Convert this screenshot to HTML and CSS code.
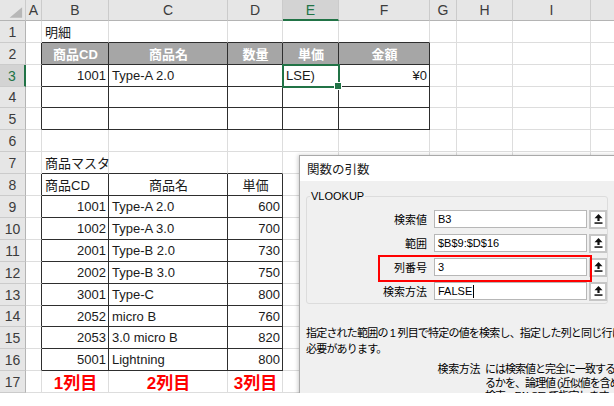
FILE: index.html
```html
<!DOCTYPE html>
<html lang="ja">
<head>
<meta charset="utf-8">
<title>VLOOKUP</title>
<link rel="stylesheet" href="styles.css">
</head>
<body>
<div class="screen">
  <div class="sheet">
    <div class="h corner"><svg width="26" height="21" viewBox="0 0 26 21"><polygon points="23,7 23,18 10,18" fill="#b7b7b7"/></svg></div>
    <div class="h">A</div><div class="h">B</div><div class="h">C</div><div class="h">D</div><div class="h sel">E</div><div class="h">F</div><div class="h">G</div><div class="h">H</div><div class="h">I</div><div class="h">J</div>

    <div class="rh">1</div><div class="c"></div><div class="c tp">明細</div><div class="c tp"></div><div class="c tp"></div><div class="c tp"></div><div class="c tp"></div><div class="c"></div><div class="c"></div><div class="c"></div><div class="c"></div>

    <div class="rh">2</div><div class="c lb"></div><div class="c t th">商品CD</div><div class="c t th">商品名</div><div class="c t th">数量</div><div class="c t th">単価</div><div class="c t th">金額</div><div class="c"></div><div class="c"></div><div class="c"></div><div class="c"></div>

    <div class="rh sel">3</div><div class="c lb"></div><div class="c t n">1001</div><div class="c t">Type-A 2.0</div><div class="c t"></div><div class="c t cur">LSE)</div><div class="c t n">¥0</div><div class="c"></div><div class="c"></div><div class="c"></div><div class="c"></div>

    <div class="rh">4</div><div class="c lb"></div><div class="c t"></div><div class="c t"></div><div class="c t"></div><div class="c t"></div><div class="c t"></div><div class="c"></div><div class="c"></div><div class="c"></div><div class="c"></div>

    <div class="rh">5</div><div class="c lb"></div><div class="c t"></div><div class="c t"></div><div class="c t"></div><div class="c t"></div><div class="c t"></div><div class="c"></div><div class="c"></div><div class="c"></div><div class="c"></div>

    <div class="rh">6</div><div class="c"></div><div class="c"></div><div class="c"></div><div class="c"></div><div class="c"></div><div class="c"></div><div class="c"></div><div class="c"></div><div class="c"></div><div class="c"></div>

    <div class="rh">7</div><div class="c"></div><div class="c tp">商品マスタ</div><div class="c tp"></div><div class="c tp"></div><div class="c"></div><div class="c"></div><div class="c"></div><div class="c"></div><div class="c"></div><div class="c"></div>

    <div class="rh">8</div><div class="c lb"></div><div class="c t">商品CD</div><div class="c t ce">商品名</div><div class="c t ce">単価</div><div class="c"></div><div class="c"></div><div class="c"></div><div class="c"></div><div class="c"></div><div class="c"></div>

    <div class="rh">9</div><div class="c lb"></div><div class="c t n">1001</div><div class="c t">Type-A 2.0</div><div class="c t n">600</div><div class="c"></div><div class="c"></div><div class="c"></div><div class="c"></div><div class="c"></div><div class="c"></div>

    <div class="rh">10</div><div class="c lb"></div><div class="c t n">1002</div><div class="c t">Type-A 3.0</div><div class="c t n">700</div><div class="c"></div><div class="c"></div><div class="c"></div><div class="c"></div><div class="c"></div><div class="c"></div>

    <div class="rh">11</div><div class="c lb"></div><div class="c t n">2001</div><div class="c t">Type-B 2.0</div><div class="c t n">730</div><div class="c"></div><div class="c"></div><div class="c"></div><div class="c"></div><div class="c"></div><div class="c"></div>

    <div class="rh">12</div><div class="c lb"></div><div class="c t n">2002</div><div class="c t">Type-B 3.0</div><div class="c t n">750</div><div class="c"></div><div class="c"></div><div class="c"></div><div class="c"></div><div class="c"></div><div class="c"></div>

    <div class="rh">13</div><div class="c lb"></div><div class="c t n">3001</div><div class="c t">Type-C</div><div class="c t n">800</div><div class="c"></div><div class="c"></div><div class="c"></div><div class="c"></div><div class="c"></div><div class="c"></div>

    <div class="rh">14</div><div class="c lb"></div><div class="c t n">2052</div><div class="c t">micro B</div><div class="c t n">760</div><div class="c"></div><div class="c"></div><div class="c"></div><div class="c"></div><div class="c"></div><div class="c"></div>

    <div class="rh">15</div><div class="c lb"></div><div class="c t n">2053</div><div class="c t">3.0 micro B</div><div class="c t n">820</div><div class="c"></div><div class="c"></div><div class="c"></div><div class="c"></div><div class="c"></div><div class="c"></div>

    <div class="rh">16</div><div class="c lb"></div><div class="c t n">5001</div><div class="c t">Lightning</div><div class="c t n">800</div><div class="c"></div><div class="c"></div><div class="c"></div><div class="c"></div><div class="c"></div><div class="c"></div>

    <div class="rh">17</div><div class="c"></div><div class="c ce red">1列目</div><div class="c ce red">2列目</div><div class="c ce red">3列目</div><div class="c"></div><div class="c"></div><div class="c"></div><div class="c"></div><div class="c"></div><div class="c"></div>
  </div>

  <div class="dlg">
    <div class="dlg-title">関数の引数</div>
    <div class="dlg-body">
      <div class="grp">
        <div class="legend">VLOOKUP</div>
        <div class="arg"><span class="lbl">検索値</span><span class="inp">B3</span><span class="btn"><svg width="9" height="10" viewBox="0 0 9 10"><path d="M4.5 0 L8.5 4.2 H5.6 V7 H3.4 V4.2 H0.5 Z" fill="#111"/><rect x="0.5" y="8.3" width="8" height="1.5" fill="#111"/></svg></span></div>
        <div class="arg"><span class="lbl">範囲</span><span class="inp">$B$9:$D$16</span><span class="btn"><svg width="9" height="10" viewBox="0 0 9 10"><path d="M4.5 0 L8.5 4.2 H5.6 V7 H3.4 V4.2 H0.5 Z" fill="#111"/><rect x="0.5" y="8.3" width="8" height="1.5" fill="#111"/></svg></span></div>
        <div class="arg hl"><span class="lbl">列番号</span><span class="inp">3</span><span class="btn"><svg width="9" height="10" viewBox="0 0 9 10"><path d="M4.5 0 L8.5 4.2 H5.6 V7 H3.4 V4.2 H0.5 Z" fill="#111"/><rect x="0.5" y="8.3" width="8" height="1.5" fill="#111"/></svg></span></div>
        <div class="arg"><span class="lbl">検索方法</span><span class="inp">FALSE<i class="caret"></i></span><span class="btn"><svg width="9" height="10" viewBox="0 0 9 10"><path d="M4.5 0 L8.5 4.2 H5.6 V7 H3.4 V4.2 H0.5 Z" fill="#111"/><rect x="0.5" y="8.3" width="8" height="1.5" fill="#111"/></svg></span></div>
      </div>
      <div class="desc">
        <div>指定された範囲の 1 列目で特定の値を検索し、指定した列と同じ行にある値を返します。</div>
        <div>必要があります。</div>
      </div>
      <div class="argdesc">
        <span class="adl">検索方法</span>
        <span class="adt">
          <span class="line">には検索値と完全に一致する値だけを検索す</span>
          <span class="line">るかを、論理値 (近似値を含めて検索 = TRUE)</span>
          <span class="line">検索 = FALSE) で指定します。</span>
        </span>
      </div>
    </div>
  </div>
</div>
</body>
</html>
```

FILE: styles.css
```css
* { box-sizing: border-box; margin: 0; padding: 0; }

body {
  margin: 0;
  background: #ffffff;
  font-family: "Liberation Sans", "Noto Sans CJK JP", sans-serif;
}

.screen {
  position: relative;
  width: 614px;
  height: 393px;
  overflow: hidden;
  background: #ffffff;
}

.sheet {
  display: grid;
  width: 660px;
  grid-template-columns: 26px 16px 67px 119px 55px 56px 91px 27px 56px 78px 69px;
  grid-template-rows: 21px 22px 22px 22px 21px 22px 22px 22px 22px 22px 22px 22px 22px 22px 21px 22px 22px 22px;
}

.h {
  background: #e6e6e6;
  border-right: 1px solid #cbcbcb;
  border-bottom: 1px solid #b4b4b4;
  display: flex;
  align-items: center;
  justify-content: center;
  font-size: 14px;
  color: #3c3c3c;
}
.h.sel {
  background: #d3d3d3;
  color: #217346;
  border-bottom: 2px solid #217346;
}
.corner { padding: 0; }

.rh {
  background: #e6e6e6;
  border-right: 1px solid #b4b4b4;
  border-bottom: 1px solid #cbcbcb;
  display: flex;
  align-items: center;
  justify-content: center;
  font-size: 14px;
  color: #3c3c3c;
}
.rh.sel {
  background: #d3d3d3;
  color: #217346;
  border-right: 2px solid #217346;
}

.c {
  border-right: 1px solid #dddddd;
  border-bottom: 1px solid #dddddd;
  display: flex;
  align-items: center;
  padding: 0 2px 0 3px;
  font-size: 13px;
  color: #1a1a1a;
  white-space: nowrap;
}
.t { border-right-color: #2e2e2e; border-bottom-color: #2e2e2e; }
.lb { border-right-color: #2e2e2e; }
.tp { border-bottom-color: #2e2e2e; }
.th {
  background: #a6a6a6;
  color: #ffffff;
  font-weight: bold;
  justify-content: center;
}
.n { justify-content: flex-end; }
.ce { justify-content: center; }
.red { color: #ff0000; font-weight: bold; font-size: 17px; }

.cur {
  position: relative;
  z-index: 1;
  outline: 2px solid #217346;
  outline-offset: -1px;
}
.cur::after {
  content: "";
  position: absolute;
  right: -4px;
  bottom: -4px;
  width: 6px;
  height: 6px;
  background: #217346;
  border: 1px solid #ffffff;
}

/* dialog */
.dlg {
  position: absolute;
  left: 299px;
  top: 155px;
  width: 330px;
  height: 260px;
  background: #f0f0f0;
  border: 1px solid #a9a9a9;
  box-shadow: -1px 0 4px rgba(0, 0, 0, 0.2);
  font-size: 11px;
  color: #000000;
  z-index: 2;
}
.dlg-title {
  height: 25px;
  background: #ffffff;
  display: flex;
  align-items: center;
  padding-left: 7px;
  font-size: 12.5px;
  color: #1a1a1a;
}
.dlg-body { padding: 15px 0 0 6px; }

.grp {
  position: relative;
  width: 302px;
  border: 1px solid #dcdcdc;
  border-radius: 3px;
  padding: 13px 0 3px 0;
}
.legend {
  position: absolute;
  top: -8px;
  left: 3px;
  padding: 0 1px;
  background: #f0f0f0;
  line-height: 14px;
  font-size: 11px;
}
.arg {
  position: relative;
  display: flex;
  align-items: center;
  height: 18px;
  margin-bottom: 6px;
}
.arg:last-child { margin-bottom: 0; }
.lbl { width: 120px; flex-shrink: 0; text-align: right; }
.inp {
  margin-left: 7px;
  width: 153px;
  height: 18px;
  flex-shrink: 0;
  background: #ffffff;
  border: 1px solid #b7b7b7;
  padding-left: 3px;
  display: flex;
  align-items: center;
}
.caret {
  display: inline-block;
  width: 1px;
  height: 13px;
  background: #000000;
  margin-left: 1px;
}
.btn {
  margin-left: 2px;
  width: 18px;
  height: 19px;
  flex-shrink: 0;
  border: 2px solid #c6c6c6;
  background: #ffffff;
  display: flex;
  align-items: center;
  justify-content: center;
}
.hl::after {
  content: "";
  position: absolute;
  left: 71px;
  top: -3px;
  width: 210px;
  height: 23px;
  border: 2px solid #ff0000;
}

.desc {
  margin-top: 21px;
  line-height: 16px;
  white-space: nowrap;
  letter-spacing: -0.8px;
}
.argdesc {
  display: flex;
  margin-top: 6px;
  line-height: 13.5px;
  white-space: nowrap;
  letter-spacing: -1px;
}
.adl { width: 174px; flex-shrink: 0; text-align: right; letter-spacing: -0.4px; }
.adt { margin-left: 5px; flex-shrink: 0; display: flex; flex-direction: column; }
.line { display: block; }
```
